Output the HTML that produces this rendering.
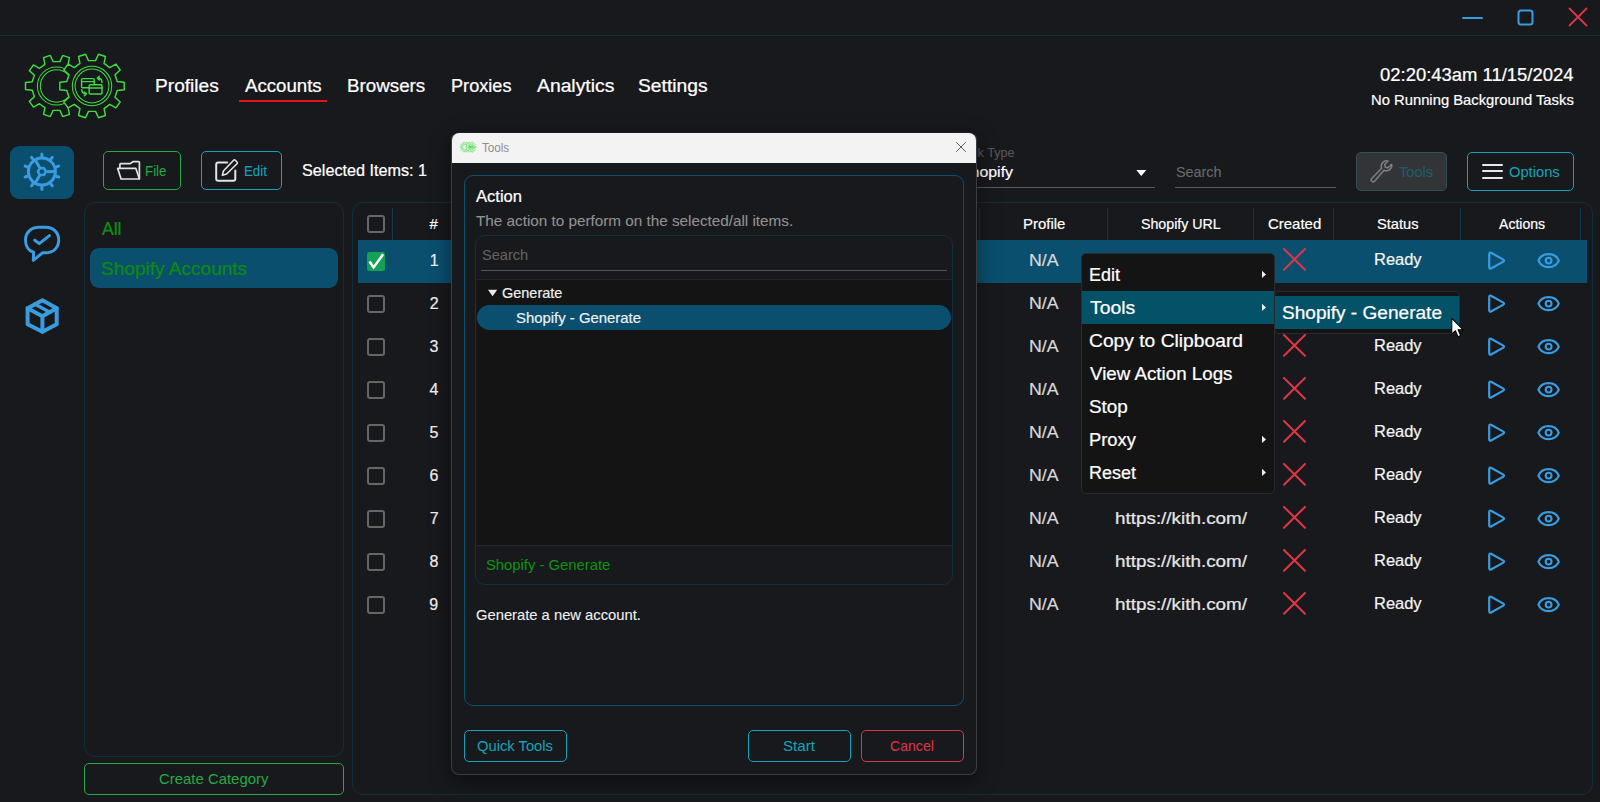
<!DOCTYPE html>
<html lang="en"><head><meta charset="utf-8"><title>Accounts - Tools</title>
<style>
html,body{margin:0;padding:0;background:#18191d;}
body{width:1600px;height:802px;position:relative;overflow:hidden;font-family:"Liberation Sans",sans-serif;}
#app{position:absolute;left:0;top:0;width:1600px;height:802px;overflow:hidden;background:#18191d;}
#app div,#app svg{position:absolute;box-sizing:border-box;}
.t{position:absolute;white-space:pre;display:block;transform-origin:0 0;}
</style></head><body><div id="app">
<div style="left:0px;top:35px;width:1600px;height:1px;background:#10303d;"></div>
<svg style="left:1450px;top:0" width="150" height="36" viewBox="1450 0 150 36" fill="none">
<line x1="1463" y1="18" x2="1482" y2="18" stroke="#3a9ce0" stroke-width="2" stroke-linecap="round"/>
<rect x="1518.5" y="10.5" width="14" height="14" rx="2.5" stroke="#3a9ce0" stroke-width="2"/>
<path d="M1569.5 8.5 L1586.5 25.5 M1586.5 8.5 L1569.5 25.5" stroke="#dc3545" stroke-width="1.8" stroke-linecap="round"/>
</svg>
<svg style="left:0;top:36px" width="140" height="100" viewBox="0 36 140 100"><g transform="translate(0 0) scale(1)" stroke="#3fdc3f" stroke-width="1.45" fill="none" stroke-linejoin="round" stroke-linecap="round"><path d="M80.72 90.31 L87.50 89.52 L87.50 82.48 L80.72 81.69 L78.63 75.25 L83.65 70.63 L79.51 64.93 L73.56 68.28 L68.08 64.30 L69.43 57.60 L62.73 55.43 L59.89 61.63 L53.11 61.63 L50.27 55.43 L43.57 57.60 L44.92 64.30 L39.44 68.28 L33.49 64.93 L29.35 70.63 L34.37 75.25 L32.28 81.69 L25.50 82.48 L25.50 89.52 L32.28 90.31 L34.37 96.75 L29.35 101.37 L33.49 107.07 L39.44 103.72 L44.92 107.70 L43.57 114.40 L50.27 116.57 L53.11 110.37 L59.89 110.37 L62.73 116.57 L69.43 114.40 L68.08 107.70 L73.56 103.72 L79.51 107.07 L83.65 101.37 L78.63 96.75 Z"/><g stroke-width="1.04"><circle cx="56.5" cy="86.0" r="19.1"/><circle cx="56.5" cy="86.0" r="16.2"/></g><path d="M117.20 90.48 L124.19 89.66 L124.19 82.34 L117.20 81.52 L115.02 74.81 L120.19 70.04 L115.90 64.12 L109.76 67.56 L104.05 63.41 L105.43 56.51 L98.47 54.25 L95.53 60.64 L88.47 60.64 L85.53 54.25 L78.57 56.51 L79.95 63.41 L74.24 67.56 L68.10 64.12 L63.81 70.04 L68.98 74.81 L66.80 81.52 L59.81 82.34 L59.81 89.66 L66.80 90.48 L68.98 97.19 L63.81 101.96 L68.10 107.88 L74.24 104.44 L79.95 108.59 L78.57 115.49 L85.53 117.75 L88.47 111.36 L95.53 111.36 L98.47 117.75 L105.43 115.49 L104.05 108.59 L109.76 104.44 L115.90 107.88 L120.19 101.96 L115.02 97.19 Z" fill="#18191d"/><g stroke-width="1.04"><circle cx="92.0" cy="86.0" r="19.7"/><circle cx="92.0" cy="86.0" r="16.9"/></g><rect x="81.6" y="78.6" width="12.6" height="9.2" rx="1"/><line x1="81.6" y1="81.6" x2="94.2" y2="81.6"/><rect x="89.2" y="84.8" width="12.8" height="9.2" rx="1" fill="#18191d"/><line x1="89.2" y1="88" x2="102" y2="88"/><path d="M102 82.5 C102 79.5 100.5 78 97.5 78 M99.3 76.2 L97.3 78 L99.3 79.9"/><path d="M81.8 89.8 C81.8 92.6 83 93.8 86 93.8 M84.4 92 L86.4 93.8 L84.4 95.7"/></g></svg>
<span class="t" style="left:154.71px;top:76px;font-size:18px;line-height:20.11px;transform:scaleX(1.0626);color:#fff;-webkit-text-stroke:0.23px;">Profiles</span>
<span class="t" style="left:244.80px;top:76px;font-size:18px;line-height:20.11px;transform:scaleX(1.0358);color:#fff;-webkit-text-stroke:0.23px;">Accounts</span>
<div style="left:239px;top:100px;width:88px;height:2px;background:#e8101a;"></div>
<span class="t" style="left:346.74px;top:76px;font-size:18px;line-height:20.11px;transform:scaleX(1.0429);color:#fff;-webkit-text-stroke:0.23px;">Browsers</span>
<span class="t" style="left:451.49px;top:76px;font-size:18px;line-height:20.11px;transform:scaleX(1.0073);color:#fff;-webkit-text-stroke:0.23px;">Proxies</span>
<span class="t" style="left:536.70px;top:76px;font-size:18px;line-height:20.11px;transform:scaleX(1.0732);color:#fff;-webkit-text-stroke:0.23px;">Analytics</span>
<span class="t" style="left:638.46px;top:76px;font-size:18px;line-height:20.11px;transform:scaleX(1.0693);color:#fff;-webkit-text-stroke:0.23px;">Settings</span>
<span class="t" style="left:1380.33px;top:65px;font-size:18px;line-height:20.11px;transform:scaleX(1.0244);color:#fff;-webkit-text-stroke:0.23px;">02:20:43am 11/15/2024</span>
<span class="t" style="left:1371.07px;top:92px;font-size:15px;line-height:16.75px;transform:scaleX(0.9859);color:#fff;-webkit-text-stroke:0.19px;">No Running Background Tasks</span>
<div style="left:10px;top:146px;width:64px;height:53px;background:#0b4f6f;border-radius:9px;"></div>
<svg style="left:0;top:140px" width="84" height="210" viewBox="0 140 84 210"><g stroke="#3a9ce0" stroke-width="3" fill="none" stroke-linecap="round" stroke-linejoin="round"><circle cx="41.9" cy="171.6" r="13.5"/><line x1="41.90" y1="156.60" x2="41.90" y2="154.00"/><line x1="33.08" y1="159.46" x2="31.55" y2="157.36"/><line x1="27.63" y1="166.96" x2="25.16" y2="166.16"/><line x1="27.63" y1="176.24" x2="25.16" y2="177.04"/><line x1="33.08" y1="183.74" x2="31.55" y2="185.84"/><line x1="41.90" y1="186.60" x2="41.90" y2="189.20"/><line x1="50.72" y1="183.74" x2="52.25" y2="185.84"/><line x1="56.17" y1="176.24" x2="58.64" y2="177.04"/><line x1="56.17" y1="166.96" x2="58.64" y2="166.16"/><line x1="50.72" y1="159.46" x2="52.25" y2="157.36"/><polygon points="45.90,171.60 43.90,168.14 39.90,168.14 37.90,171.60 39.90,175.06 43.90,175.06" stroke-width="2.6"/><line x1="46.50" y1="171.60" x2="54.90" y2="171.60" stroke-linecap="butt"/><line x1="39.60" y1="167.62" x2="35.40" y2="160.34" stroke-linecap="butt"/><line x1="39.60" y1="175.58" x2="35.40" y2="182.86" stroke-linecap="butt"/></g><g stroke="#3a9ce0" stroke-width="3" fill="none" stroke-linecap="round" stroke-linejoin="round"><path d="M39 227.3 H45.5 C53.5 227.3 58.7 232.5 58.7 240 C58.7 247.5 53.5 252.8 45.5 252.8 H42.5 L33.3 260.3 L33.6 252.2 C28.5 250.8 25.5 246 25.5 240 C25.5 232.5 31 227.3 39 227.3 Z"/><path d="M34.8 240.2 L39.3 243.6 L49.4 235.6"/></g><g stroke="#3a9ce0" stroke-width="4" fill="none" stroke-linejoin="round" stroke-linecap="round"><polygon points="42.4,300.3 56.7,308.2 56.7,324.2 42.4,331.8 27.6,324.2 27.6,308.2"/><path d="M27.6 308.2 L42.4 316.2 L56.7 308.2 M42.4 316.2 V331.8" /><path d="M34.6 304 L50 312.3" stroke-width="3.4"/></g></svg>
<div style="left:103px;top:151px;width:78px;height:39px;border:1px solid #28a745;border-radius:5px;"></div>
<div style="left:201px;top:151px;width:81px;height:39px;border:1px solid #17a2b8;border-radius:5px;"></div>
<svg style="left:110px;top:155px" width="140" height="32" viewBox="110 155 140 32" fill="none" stroke="#e4e4e4" stroke-width="1.6" stroke-linejoin="round" stroke-linecap="round">
<path d="M119.9 167.8 V164.4 q0 -0.8 0.8 -0.8 H130.3 L132.9 161.7 H138.6 q0.8 0 0.8 0.8 V178.4" stroke-width="1.7"/>
<path d="M117.7 168.4 H135.9 L139.4 179 H121.1 Z" stroke-width="1.7"/>
<path d="M227.2 162.4 H218.2 a2 2 0 0 0 -2 2 V178.7 a2 2 0 0 0 2 2 H233.3 a2 2 0 0 0 2 -2 V170.6" stroke-width="2"/>
<path d="M222.4 175.2 L223.4 171 L233.6 160.2 a1.2 1.2 0 0 1 1.7 0 L237 162 a1.2 1.2 0 0 1 0 1.7 L226.6 174 Z" stroke-width="1.6"/>
</svg>
<span class="t" style="left:145.49px;top:163px;font-size:15px;line-height:16.75px;transform:scaleX(0.8894);color:#28a745;-webkit-text-stroke:0.05px;">File</span>
<span class="t" style="left:243.69px;top:163px;font-size:15px;line-height:16.75px;transform:scaleX(0.8857);color:#17a2b8;-webkit-text-stroke:0.05px;">Edit</span>
<span class="t" style="left:302.09px;top:161px;font-size:17px;line-height:18.99px;transform:scaleX(0.9518);color:#fff;-webkit-text-stroke:0.22px;">Selected Items: 1</span>
<span class="t" style="left:957.56px;top:146px;font-size:13px;line-height:14.52px;transform:scaleX(0.9687);color:#585858;-webkit-text-stroke:0.1px;">Task Type</span>
<span class="t" style="left:960.14px;top:164px;font-size:15px;line-height:16.75px;transform:scaleX(1.0592);color:#fff;-webkit-text-stroke:0.19px;">Shopify</span>
<div style="left:957px;top:187px;width:198px;height:1px;background:#5a5a5a;"></div>
<svg style="left:1134px;top:168px" width="14" height="10" viewBox="1134 168 14 10"><path d="M1136.3 170 H1146.3 L1141.3 176 Z" fill="#fff"/></svg>
<span class="t" style="left:1175.80px;top:164px;font-size:15px;line-height:16.75px;transform:scaleX(0.9569);color:#6a6a6a;-webkit-text-stroke:0.1px;">Search</span>
<div style="left:1175px;top:187px;width:161px;height:1px;background:#5a5a5a;"></div>
<div style="left:1356px;top:152px;width:91px;height:39px;background:#323438;border:1px solid #34505a;border-radius:5px;"></div>
<svg style="left:1366px;top:156px" width="30" height="30" viewBox="1366 156 30 30" fill="none" stroke="#7d8083" stroke-width="1.6" stroke-linejoin="round" stroke-linecap="round">
<g transform="translate(1370.4 183.2) scale(0.955) translate(-1369.4 -183.2)"><path d="M1391.6 163.4 a5.6 5.6 0 0 1 -8 6.2 l-9.6 11.4 a2 2 0 0 1 -3.2 -2.8 l10.4 -10.6 a5.6 5.6 0 0 1 6.6 -7.6 l-3.4 3.6 l0.6 2.8 l2.8 0.6 z"/></g>
</svg>
<span class="t" style="left:1399.03px;top:164px;font-size:15px;line-height:16.75px;transform:scaleX(0.9758);color:#1d5e69;-webkit-text-stroke:0.15px;">Tools</span>
<div style="left:1467px;top:152px;width:107px;height:39px;border:1px solid #17a2b8;border-radius:5px;"></div>
<div style="left:1482px;top:164px;width:21px;height:2px;background:#e8e8e8;border-radius:1px;"></div>
<div style="left:1482px;top:170.3px;width:21px;height:2px;background:#e8e8e8;border-radius:1px;"></div>
<div style="left:1482px;top:176.6px;width:21px;height:2px;background:#e8e8e8;border-radius:1px;"></div>
<span class="t" style="left:1509.06px;top:164px;font-size:15px;line-height:16.75px;transform:scaleX(0.9802);color:#17a2b8;-webkit-text-stroke:0.05px;">Options</span>
<div style="left:84px;top:202px;width:260px;height:555px;border:1px solid #0f2e3b;border-radius:11px;"></div>
<span class="t" style="left:101.80px;top:219px;font-size:18px;line-height:20.11px;transform:scaleX(0.9760);color:#0e930e;-webkit-text-stroke:0.23px;">All</span>
<div style="left:90px;top:248px;width:248px;height:40px;background:#0b4f6f;border-radius:9px;"></div>
<span class="t" style="left:101.07px;top:259px;font-size:18px;line-height:20.11px;transform:scaleX(1.0584);color:#0a8c10;-webkit-text-stroke:0.23px;">Shopify Accounts</span>
<div style="left:84px;top:763px;width:260px;height:32px;border:1px solid #28a745;border-radius:5px;"></div>
<span class="t" style="left:159.35px;top:771px;font-size:15px;line-height:16.75px;transform:scaleX(0.9941);color:#28a745;-webkit-text-stroke:0.05px;">Create Category</span>
<div style="left:352px;top:202px;width:1241px;height:593px;border:1px solid #0f2e3b;border-radius:11px;"></div>
<div style="left:392px;top:208px;width:1px;height:32px;background:#12394a;"></div>
<div style="left:979px;top:208px;width:1px;height:32px;background:#12394a;"></div>
<div style="left:1107px;top:208px;width:1px;height:32px;background:#12394a;"></div>
<div style="left:1253px;top:208px;width:1px;height:32px;background:#12394a;"></div>
<div style="left:1333px;top:208px;width:1px;height:32px;background:#12394a;"></div>
<div style="left:1460px;top:208px;width:1px;height:32px;background:#12394a;"></div>
<div style="left:1580px;top:208px;width:1px;height:32px;background:#12394a;"></div>
<div style="left:367px;top:215px;width:18px;height:18px;border:2px solid #666;border-radius:3px;"></div>
<span class="t" style="left:429.40px;top:216px;font-size:15px;line-height:16.75px;color:#fff;-webkit-text-stroke:0.19px;">#</span>
<span class="t" style="left:1023.15px;top:216px;font-size:15px;line-height:16.75px;transform:scaleX(0.9969);color:#fff;-webkit-text-stroke:0.19px;">Profile</span>
<span class="t" style="left:1141.41px;top:216px;font-size:15px;line-height:16.75px;transform:scaleX(0.9468);color:#fff;-webkit-text-stroke:0.19px;">Shopify URL</span>
<span class="t" style="left:1268.05px;top:216px;font-size:15px;line-height:16.75px;transform:scaleX(0.9976);color:#fff;-webkit-text-stroke:0.19px;">Created</span>
<span class="t" style="left:1377.19px;top:216px;font-size:15px;line-height:16.75px;transform:scaleX(0.9789);color:#fff;-webkit-text-stroke:0.19px;">Status</span>
<span class="t" style="left:1499.20px;top:216px;font-size:15px;line-height:16.75px;transform:scaleX(0.9374);color:#fff;-webkit-text-stroke:0.19px;">Actions</span>
<div style="left:358px;top:240px;width:1229px;height:43px;background:#0b4f6f;"></div>
<div style="left:367px;top:252px;width:18px;height:19px;background:#14a055;border-radius:2.5px;"></div>
<svg style="left:367px;top:252px" width="18" height="19" viewBox="0 0 18 19"><path d="M2.5 9.5 L6.6 15.4 L16.1 2.3" fill="none" stroke="#fff" stroke-width="2.5" stroke-linecap="butt" stroke-linejoin="miter"/></svg>
<span class="t" style="left:429.75px;top:252px;font-size:16px;line-height:17.87px;color:#f2f2f2;-webkit-text-stroke:0.21px;">1</span>
<span class="t" style="left:1029.22px;top:252px;font-size:16px;line-height:17.87px;transform:scaleX(1.1074);color:#d8d8d8;-webkit-text-stroke:0.21px;">N/A</span>
<span class="t" style="left:1374.31px;top:251px;font-size:16px;line-height:17.87px;transform:scaleX(1.0289);color:#f4f4f4;-webkit-text-stroke:0.21px;">Ready</span>
<div style="left:367px;top:295px;width:18px;height:18px;border:2px solid #666;border-radius:3px;"></div>
<span class="t" style="left:429.65px;top:295px;font-size:16px;line-height:17.87px;color:#f2f2f2;-webkit-text-stroke:0.21px;">2</span>
<span class="t" style="left:1029.22px;top:295px;font-size:16px;line-height:17.87px;transform:scaleX(1.1074);color:#d8d8d8;-webkit-text-stroke:0.21px;">N/A</span>
<span class="t" style="left:1374.31px;top:294px;font-size:16px;line-height:17.87px;transform:scaleX(1.0289);color:#f4f4f4;-webkit-text-stroke:0.21px;">Ready</span>
<div style="left:367px;top:338px;width:18px;height:18px;border:2px solid #666;border-radius:3px;"></div>
<span class="t" style="left:429.48px;top:338px;font-size:16px;line-height:17.87px;color:#f2f2f2;-webkit-text-stroke:0.21px;">3</span>
<span class="t" style="left:1029.22px;top:338px;font-size:16px;line-height:17.87px;transform:scaleX(1.1074);color:#d8d8d8;-webkit-text-stroke:0.21px;">N/A</span>
<span class="t" style="left:1374.31px;top:337px;font-size:16px;line-height:17.87px;transform:scaleX(1.0289);color:#f4f4f4;-webkit-text-stroke:0.21px;">Ready</span>
<div style="left:367px;top:381px;width:18px;height:18px;border:2px solid #666;border-radius:3px;"></div>
<span class="t" style="left:429.43px;top:381px;font-size:16px;line-height:17.87px;color:#f2f2f2;-webkit-text-stroke:0.21px;">4</span>
<span class="t" style="left:1029.22px;top:381px;font-size:16px;line-height:17.87px;transform:scaleX(1.1074);color:#d8d8d8;-webkit-text-stroke:0.21px;">N/A</span>
<span class="t" style="left:1374.31px;top:380px;font-size:16px;line-height:17.87px;transform:scaleX(1.0289);color:#f4f4f4;-webkit-text-stroke:0.21px;">Ready</span>
<div style="left:367px;top:424px;width:18px;height:18px;border:2px solid #666;border-radius:3px;"></div>
<span class="t" style="left:429.57px;top:424px;font-size:16px;line-height:17.87px;color:#f2f2f2;-webkit-text-stroke:0.21px;">5</span>
<span class="t" style="left:1029.22px;top:424px;font-size:16px;line-height:17.87px;transform:scaleX(1.1074);color:#d8d8d8;-webkit-text-stroke:0.21px;">N/A</span>
<span class="t" style="left:1374.31px;top:423px;font-size:16px;line-height:17.87px;transform:scaleX(1.0289);color:#f4f4f4;-webkit-text-stroke:0.21px;">Ready</span>
<div style="left:367px;top:467px;width:18px;height:18px;border:2px solid #666;border-radius:3px;"></div>
<span class="t" style="left:429.45px;top:467px;font-size:16px;line-height:17.87px;color:#f2f2f2;-webkit-text-stroke:0.21px;">6</span>
<span class="t" style="left:1029.22px;top:467px;font-size:16px;line-height:17.87px;transform:scaleX(1.1074);color:#d8d8d8;-webkit-text-stroke:0.21px;">N/A</span>
<span class="t" style="left:1374.31px;top:466px;font-size:16px;line-height:17.87px;transform:scaleX(1.0289);color:#f4f4f4;-webkit-text-stroke:0.21px;">Ready</span>
<div style="left:367px;top:510px;width:18px;height:18px;border:2px solid #666;border-radius:3px;"></div>
<span class="t" style="left:429.65px;top:510px;font-size:16px;line-height:17.87px;color:#f2f2f2;-webkit-text-stroke:0.21px;">7</span>
<span class="t" style="left:1029.22px;top:510px;font-size:16px;line-height:17.87px;transform:scaleX(1.1074);color:#d8d8d8;-webkit-text-stroke:0.21px;">N/A</span>
<span class="t" style="left:1114.97px;top:510px;font-size:16px;line-height:17.87px;transform:scaleX(1.1784);color:#e6e6e6;-webkit-text-stroke:0.21px;">https://kith.com/</span>
<span class="t" style="left:1374.31px;top:509px;font-size:16px;line-height:17.87px;transform:scaleX(1.0289);color:#f4f4f4;-webkit-text-stroke:0.21px;">Ready</span>
<div style="left:367px;top:553px;width:18px;height:18px;border:2px solid #666;border-radius:3px;"></div>
<span class="t" style="left:429.48px;top:553px;font-size:16px;line-height:17.87px;color:#f2f2f2;-webkit-text-stroke:0.21px;">8</span>
<span class="t" style="left:1029.22px;top:553px;font-size:16px;line-height:17.87px;transform:scaleX(1.1074);color:#d8d8d8;-webkit-text-stroke:0.21px;">N/A</span>
<span class="t" style="left:1114.97px;top:553px;font-size:16px;line-height:17.87px;transform:scaleX(1.1784);color:#e6e6e6;-webkit-text-stroke:0.21px;">https://kith.com/</span>
<span class="t" style="left:1374.31px;top:552px;font-size:16px;line-height:17.87px;transform:scaleX(1.0289);color:#f4f4f4;-webkit-text-stroke:0.21px;">Ready</span>
<div style="left:367px;top:596px;width:18px;height:18px;border:2px solid #666;border-radius:3px;"></div>
<span class="t" style="left:429.35px;top:596px;font-size:16px;line-height:17.87px;color:#f2f2f2;-webkit-text-stroke:0.21px;">9</span>
<span class="t" style="left:1029.22px;top:596px;font-size:16px;line-height:17.87px;transform:scaleX(1.1074);color:#d8d8d8;-webkit-text-stroke:0.21px;">N/A</span>
<span class="t" style="left:1114.97px;top:596px;font-size:16px;line-height:17.87px;transform:scaleX(1.1784);color:#e6e6e6;-webkit-text-stroke:0.21px;">https://kith.com/</span>
<span class="t" style="left:1374.31px;top:595px;font-size:16px;line-height:17.87px;transform:scaleX(1.0289);color:#f4f4f4;-webkit-text-stroke:0.21px;">Ready</span>
<svg style="left:1270px;top:236px" width="320" height="400" viewBox="1270 236 320 400" fill="none" stroke-linecap="round" stroke-linejoin="round"><path d="M1284 248.9 L1305 269.7 M1305 248.9 L1284 269.7" stroke="#dc3545" stroke-width="2.1"/><path d="M1489.20 254.30 Q1489.20 251.70 1491.47 252.96 L1502.93 259.34 Q1505.20 260.60 1502.93 261.86 L1491.47 268.24 Q1489.20 269.50 1489.20 266.90 Z" stroke="#3a9ce0" stroke-width="2.2"/><path d="M1538.4 260.6 C1542 252.00000000000003 1555.2 252.00000000000003 1558.8 260.6 C1555.2 269.20000000000005 1542 269.20000000000005 1538.4 260.6 Z" stroke="#3a9ce0" stroke-width="2.2"/><circle cx="1548.6" cy="260.6" r="2.9" stroke="#3a9ce0" stroke-width="2.1"/><path d="M1284 291.90000000000003 L1305 312.7 M1305 291.90000000000003 L1284 312.7" stroke="#dc3545" stroke-width="2.1"/><path d="M1489.20 297.30 Q1489.20 294.70 1491.47 295.96 L1502.93 302.34 Q1505.20 303.60 1502.93 304.86 L1491.47 311.24 Q1489.20 312.50 1489.20 309.90 Z" stroke="#3a9ce0" stroke-width="2.2"/><path d="M1538.4 303.6 C1542 295.0 1555.2 295.0 1558.8 303.6 C1555.2 312.20000000000005 1542 312.20000000000005 1538.4 303.6 Z" stroke="#3a9ce0" stroke-width="2.2"/><circle cx="1548.6" cy="303.6" r="2.9" stroke="#3a9ce0" stroke-width="2.1"/><path d="M1284 334.90000000000003 L1305 355.7 M1305 334.90000000000003 L1284 355.7" stroke="#dc3545" stroke-width="2.1"/><path d="M1489.20 340.30 Q1489.20 337.70 1491.47 338.96 L1502.93 345.34 Q1505.20 346.60 1502.93 347.86 L1491.47 354.24 Q1489.20 355.50 1489.20 352.90 Z" stroke="#3a9ce0" stroke-width="2.2"/><path d="M1538.4 346.6 C1542 338.0 1555.2 338.0 1558.8 346.6 C1555.2 355.20000000000005 1542 355.20000000000005 1538.4 346.6 Z" stroke="#3a9ce0" stroke-width="2.2"/><circle cx="1548.6" cy="346.6" r="2.9" stroke="#3a9ce0" stroke-width="2.1"/><path d="M1284 377.90000000000003 L1305 398.7 M1305 377.90000000000003 L1284 398.7" stroke="#dc3545" stroke-width="2.1"/><path d="M1489.20 383.30 Q1489.20 380.70 1491.47 381.96 L1502.93 388.34 Q1505.20 389.60 1502.93 390.86 L1491.47 397.24 Q1489.20 398.50 1489.20 395.90 Z" stroke="#3a9ce0" stroke-width="2.2"/><path d="M1538.4 389.6 C1542 381.0 1555.2 381.0 1558.8 389.6 C1555.2 398.20000000000005 1542 398.20000000000005 1538.4 389.6 Z" stroke="#3a9ce0" stroke-width="2.2"/><circle cx="1548.6" cy="389.6" r="2.9" stroke="#3a9ce0" stroke-width="2.1"/><path d="M1284 420.90000000000003 L1305 441.7 M1305 420.90000000000003 L1284 441.7" stroke="#dc3545" stroke-width="2.1"/><path d="M1489.20 426.30 Q1489.20 423.70 1491.47 424.96 L1502.93 431.34 Q1505.20 432.60 1502.93 433.86 L1491.47 440.24 Q1489.20 441.50 1489.20 438.90 Z" stroke="#3a9ce0" stroke-width="2.2"/><path d="M1538.4 432.6 C1542 424.0 1555.2 424.0 1558.8 432.6 C1555.2 441.20000000000005 1542 441.20000000000005 1538.4 432.6 Z" stroke="#3a9ce0" stroke-width="2.2"/><circle cx="1548.6" cy="432.6" r="2.9" stroke="#3a9ce0" stroke-width="2.1"/><path d="M1284 463.90000000000003 L1305 484.7 M1305 463.90000000000003 L1284 484.7" stroke="#dc3545" stroke-width="2.1"/><path d="M1489.20 469.30 Q1489.20 466.70 1491.47 467.96 L1502.93 474.34 Q1505.20 475.60 1502.93 476.86 L1491.47 483.24 Q1489.20 484.50 1489.20 481.90 Z" stroke="#3a9ce0" stroke-width="2.2"/><path d="M1538.4 475.6 C1542 467.0 1555.2 467.0 1558.8 475.6 C1555.2 484.20000000000005 1542 484.20000000000005 1538.4 475.6 Z" stroke="#3a9ce0" stroke-width="2.2"/><circle cx="1548.6" cy="475.6" r="2.9" stroke="#3a9ce0" stroke-width="2.1"/><path d="M1284 506.9 L1305 527.6999999999999 M1305 506.9 L1284 527.6999999999999" stroke="#dc3545" stroke-width="2.1"/><path d="M1489.20 512.30 Q1489.20 509.70 1491.47 510.96 L1502.93 517.34 Q1505.20 518.60 1502.93 519.86 L1491.47 526.24 Q1489.20 527.50 1489.20 524.90 Z" stroke="#3a9ce0" stroke-width="2.2"/><path d="M1538.4 518.6 C1542 510.0 1555.2 510.0 1558.8 518.6 C1555.2 527.2 1542 527.2 1538.4 518.6 Z" stroke="#3a9ce0" stroke-width="2.2"/><circle cx="1548.6" cy="518.6" r="2.9" stroke="#3a9ce0" stroke-width="2.1"/><path d="M1284 549.9 L1305 570.6999999999999 M1305 549.9 L1284 570.6999999999999" stroke="#dc3545" stroke-width="2.1"/><path d="M1489.20 555.30 Q1489.20 552.70 1491.47 553.96 L1502.93 560.34 Q1505.20 561.60 1502.93 562.86 L1491.47 569.24 Q1489.20 570.50 1489.20 567.90 Z" stroke="#3a9ce0" stroke-width="2.2"/><path d="M1538.4 561.6 C1542 553.0 1555.2 553.0 1558.8 561.6 C1555.2 570.2 1542 570.2 1538.4 561.6 Z" stroke="#3a9ce0" stroke-width="2.2"/><circle cx="1548.6" cy="561.6" r="2.9" stroke="#3a9ce0" stroke-width="2.1"/><path d="M1284 592.9 L1305 613.6999999999999 M1305 592.9 L1284 613.6999999999999" stroke="#dc3545" stroke-width="2.1"/><path d="M1489.20 598.30 Q1489.20 595.70 1491.47 596.96 L1502.93 603.34 Q1505.20 604.60 1502.93 605.86 L1491.47 612.24 Q1489.20 613.50 1489.20 610.90 Z" stroke="#3a9ce0" stroke-width="2.2"/><path d="M1538.4 604.6 C1542 596.0 1555.2 596.0 1558.8 604.6 C1555.2 613.2 1542 613.2 1538.4 604.6 Z" stroke="#3a9ce0" stroke-width="2.2"/><circle cx="1548.6" cy="604.6" r="2.9" stroke="#3a9ce0" stroke-width="2.1"/></svg>
<div style="left:451px;top:132px;width:526px;height:643px;background:#18191d;border:1px solid #3c3d40;border-top-color:#1f2024;border-radius:8px;box-shadow:0 6px 22px rgba(0,0,0,0.45);overflow:hidden;"><div style="left:0;top:0;width:524px;height:30px;background:#f3f3f3;"></div></div>
<svg style="left:459px;top:140px" width="18" height="14" viewBox="459 140 18 14"><g transform="translate(456.2 133.398) scale(0.16)" stroke="#3fdc3f" stroke-width="3.2" fill="none" stroke-linejoin="round" stroke-linecap="round"><path d="M80.72 90.31 L87.50 89.52 L87.50 82.48 L80.72 81.69 L78.63 75.25 L83.65 70.63 L79.51 64.93 L73.56 68.28 L68.08 64.30 L69.43 57.60 L62.73 55.43 L59.89 61.63 L53.11 61.63 L50.27 55.43 L43.57 57.60 L44.92 64.30 L39.44 68.28 L33.49 64.93 L29.35 70.63 L34.37 75.25 L32.28 81.69 L25.50 82.48 L25.50 89.52 L32.28 90.31 L34.37 96.75 L29.35 101.37 L33.49 107.07 L39.44 103.72 L44.92 107.70 L43.57 114.40 L50.27 116.57 L53.11 110.37 L59.89 110.37 L62.73 116.57 L69.43 114.40 L68.08 107.70 L73.56 103.72 L79.51 107.07 L83.65 101.37 L78.63 96.75 Z"/><g stroke-width="2.30"><circle cx="56.5" cy="86.0" r="19.1"/><circle cx="56.5" cy="86.0" r="16.2"/></g><path d="M117.20 90.48 L124.19 89.66 L124.19 82.34 L117.20 81.52 L115.02 74.81 L120.19 70.04 L115.90 64.12 L109.76 67.56 L104.05 63.41 L105.43 56.51 L98.47 54.25 L95.53 60.64 L88.47 60.64 L85.53 54.25 L78.57 56.51 L79.95 63.41 L74.24 67.56 L68.10 64.12 L63.81 70.04 L68.98 74.81 L66.80 81.52 L59.81 82.34 L59.81 89.66 L66.80 90.48 L68.98 97.19 L63.81 101.96 L68.10 107.88 L74.24 104.44 L79.95 108.59 L78.57 115.49 L85.53 117.75 L88.47 111.36 L95.53 111.36 L98.47 117.75 L105.43 115.49 L104.05 108.59 L109.76 104.44 L115.90 107.88 L120.19 101.96 L115.02 97.19 Z" fill="#f3f3f3"/><g stroke-width="2.30"><circle cx="92.0" cy="86.0" r="19.7"/><circle cx="92.0" cy="86.0" r="16.9"/></g><rect x="81.6" y="78.6" width="12.6" height="9.2" rx="1"/><line x1="81.6" y1="81.6" x2="94.2" y2="81.6"/><rect x="89.2" y="84.8" width="12.8" height="9.2" rx="1" fill="#f3f3f3"/><line x1="89.2" y1="88" x2="102" y2="88"/><path d="M102 82.5 C102 79.5 100.5 78 97.5 78 M99.3 76.2 L97.3 78 L99.3 79.9"/><path d="M81.8 89.8 C81.8 92.6 83 93.8 86 93.8 M84.4 92 L86.4 93.8 L84.4 95.7"/></g></svg>
<span class="t" style="left:481.96px;top:142px;font-size:12px;line-height:13.4px;transform:scaleX(0.9680);color:#8e8e8e;-webkit-text-stroke:0px;">Tools</span>
<svg style="left:954px;top:140px" width="14" height="14" viewBox="954 140 14 14"><path d="M956.2 142.2 L965.8 151.8 M965.8 142.2 L956.2 151.8" stroke="#5e5e5e" stroke-width="1" fill="none"/></svg>
<div style="left:464px;top:175px;width:500px;height:531px;border:1px solid #0c5070;border-radius:9px;"></div>
<span class="t" style="left:476.20px;top:187px;font-size:17px;line-height:18.99px;transform:scaleX(0.9734);color:#fff;-webkit-text-stroke:0.22px;">Action</span>
<span class="t" style="left:476.02px;top:213px;font-size:15px;line-height:16.75px;transform:scaleX(1.0171);color:#929292;-webkit-text-stroke:0.1px;">The action to perform on the selected/all items.</span>
<div style="left:475px;top:235px;width:478px;height:350px;border:1px solid #10303c;border-radius:10px;"></div>
<span class="t" style="left:481.69px;top:247px;font-size:15px;line-height:16.75px;transform:scaleX(0.9722);color:#626262;-webkit-text-stroke:0.1px;">Search</span>
<div style="left:481px;top:270px;width:466px;height:1px;background:#565656;"></div>
<div style="left:477px;top:279.5px;width:474.5px;height:265.5px;background:#141414;"></div>
<div style="left:476.5px;top:279px;width:475.5px;height:1px;background:#232629;"></div>
<div style="left:476.5px;top:545px;width:475.5px;height:1px;background:#26282b;"></div>
<svg style="left:486px;top:288px" width="14" height="10" viewBox="486 288 14 10"><path d="M488 289.8 H497.2 L492.6 296.2 Z" fill="#e8e8e8"/></svg>
<span class="t" style="left:502.48px;top:285px;font-size:15px;line-height:16.75px;transform:scaleX(0.9649);color:#f0f0f0;-webkit-text-stroke:0.19px;">Generate</span>
<div style="left:477px;top:305px;width:474px;height:25px;background:#0b4f6f;border-radius:12.5px;"></div>
<span class="t" style="left:515.58px;top:310px;font-size:15px;line-height:16.75px;transform:scaleX(0.9924);color:#f0f0f0;-webkit-text-stroke:0.19px;">Shopify - Generate</span>
<span class="t" style="left:486.38px;top:557px;font-size:15px;line-height:16.75px;transform:scaleX(0.9868);color:#0e930e;-webkit-text-stroke:0.05px;">Shopify - Generate</span>
<span class="t" style="left:476.46px;top:607px;font-size:15px;line-height:16.75px;transform:scaleX(0.9837);color:#f0f0f0;-webkit-text-stroke:0.1px;">Generate a new account.</span>
<div style="left:464px;top:730px;width:103px;height:32px;border:1px solid #17a2b8;border-radius:5px;"></div>
<span class="t" style="left:477.26px;top:738px;font-size:15px;line-height:16.75px;transform:scaleX(0.9829);color:#17a2b8;-webkit-text-stroke:0.05px;">Quick Tools</span>
<div style="left:748px;top:730px;width:103px;height:32px;border:1px solid #17a2b8;border-radius:5px;"></div>
<span class="t" style="left:783.37px;top:738px;font-size:15px;line-height:16.75px;transform:scaleX(1.0097);color:#17a2b8;-webkit-text-stroke:0.05px;">Start</span>
<div style="left:861px;top:730px;width:103px;height:32px;border:1px solid #dc3545;border-radius:5px;"></div>
<span class="t" style="left:890.49px;top:738px;font-size:15px;line-height:16.75px;transform:scaleX(0.9400);color:#dc3545;-webkit-text-stroke:0.05px;">Cancel</span>
<div style="left:1081px;top:253px;width:194px;height:241px;background:#141414;border:1px solid #2b2b2b;border-radius:5px;"></div>
<div style="left:1082px;top:291px;width:192px;height:33px;background:#035268;"></div>
<span class="t" style="left:1089.10px;top:265px;font-size:18px;line-height:20.11px;transform:scaleX(0.9974);color:#fff;-webkit-text-stroke:0.23px;">Edit</span>
<span class="t" style="left:1089.80px;top:298px;font-size:18px;line-height:20.11px;transform:scaleX(1.0756);color:#fff;-webkit-text-stroke:0.23px;">Tools</span>
<span class="t" style="left:1089.46px;top:331px;font-size:18px;line-height:20.11px;transform:scaleX(1.0688);color:#fff;-webkit-text-stroke:0.23px;">Copy to Clipboard</span>
<span class="t" style="left:1090.07px;top:364px;font-size:18px;line-height:20.11px;transform:scaleX(1.0419);color:#fff;-webkit-text-stroke:0.23px;">View Action Logs</span>
<span class="t" style="left:1089.48px;top:397px;font-size:18px;line-height:20.11px;transform:scaleX(1.0488);color:#fff;-webkit-text-stroke:0.23px;">Stop</span>
<span class="t" style="left:1089.07px;top:430px;font-size:18px;line-height:20.11px;transform:scaleX(1.0180);color:#fff;-webkit-text-stroke:0.23px;">Proxy</span>
<span class="t" style="left:1089.10px;top:463px;font-size:18px;line-height:20.11px;transform:scaleX(0.9983);color:#fff;-webkit-text-stroke:0.23px;">Reset</span>
<svg style="left:1258px;top:254px" width="12" height="240" viewBox="1258 254 12 240" fill="#f0f0f0"><path d="M1262 270.79999999999995 L1266 274.4 L1262 278.0 Z"/><path d="M1262 303.79999999999995 L1266 307.4 L1262 311.0 Z"/><path d="M1262 435.79999999999995 L1266 439.4 L1262 443.0 Z"/><path d="M1262 468.79999999999995 L1266 472.4 L1262 476.0 Z"/></svg>
<div style="left:1274px;top:291px;width:186px;height:43px;background:#141414;border:1px solid #2b2b2b;border-radius:5px;"></div>
<div style="left:1275px;top:296px;width:184px;height:33px;background:#035268;"></div>
<span class="t" style="left:1282.07px;top:303px;font-size:18px;line-height:20.11px;transform:scaleX(1.0589);color:#fff;-webkit-text-stroke:0.23px;">Shopify - Generate</span>
<svg style="left:1448px;top:316px" width="20" height="26" viewBox="0 0 20 26"><g transform="translate(3.8 2.4) scale(0.93) translate(-4 -2.6)"><path d="M4 2.6 V19.4 L7.9 15.8 L10.7 22.2 L13.5 21 L10.7 14.8 H16 Z" fill="#fff" stroke="#000" stroke-width="1.1" stroke-linejoin="round"/></g></svg>
</div></body></html>
